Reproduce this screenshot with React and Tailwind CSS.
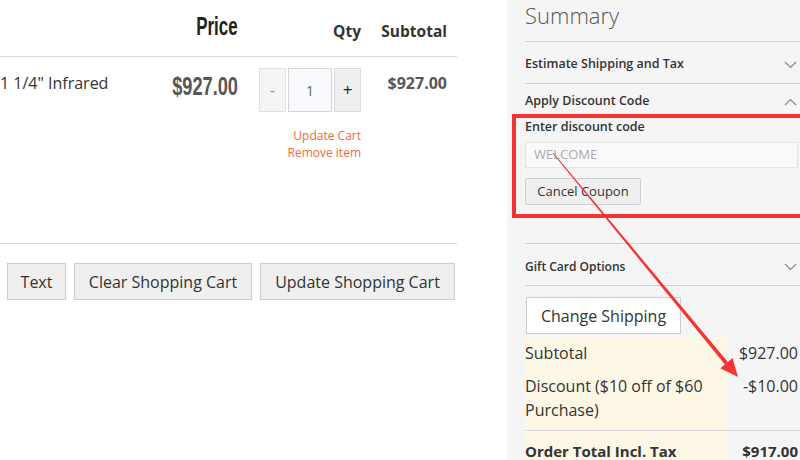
import React from 'react';

const Chevron = ({ up }) => (
  <svg width="13" height="8" viewBox="0 0 13 8" className="shrink-0">
    <polyline
      points={up ? '1,7 6.5,1.5 12,7' : '1,1 6.5,6.5 12,1'}
      fill="none"
      stroke="#8a8a8a"
      strokeWidth="1.2"
    />
  </svg>
);

const condensed = { fontFamily: '"Liberation Sans Narrow", "Liberation Sans", sans-serif' };

const App = () => {
  return (
    <div className="relative w-[800px] h-[460px] overflow-hidden bg-white text-[#333] font-['Open_Sans',sans-serif]">
      <div className="flex h-full">
        {/* Cart table */}
        <div className="w-[457px] shrink-0">
          <div className="grid grid-cols-[100px_138px_124px_85px] h-[57px] border-b border-[#d9d9d9] items-start pt-[10px]">
            <div />
            <div className="text-right whitespace-nowrap">
              <span style={condensed} className="inline-block origin-right scale-x-[0.65] text-[26px] font-bold leading-[32px] text-[#222]">Price</span>
            </div>
            <div className="text-right pt-[10px] text-[15.5px] font-bold leading-[22px] pr-[1px]">Qty</div>
            <div className="text-right pt-[10px] text-[15.5px] font-bold leading-[22px]">Subtotal</div>
          </div>

          <div className="grid grid-cols-[100px_138px_124px_85px] h-[187px] border-b border-[#d9d9d9] items-start pt-[11px]">
            <div className="pt-[3px] text-[16px] leading-[24px] whitespace-nowrap">1 1/4" Infrared</div>
            <div className="text-right whitespace-nowrap pt-[2px]">
              <span style={condensed} className="inline-block origin-right scale-x-[0.7] text-[26px] font-bold leading-[32px] text-[#575757]">$927.00</span>
            </div>
            <div className="flex flex-col items-end pr-[1px]">
              <div className="flex gap-[2px]">
                <div className="w-[27px] h-[44px] flex items-center justify-center bg-[#f4f4f4] border border-[#e1e1e1] text-[#888] text-[14px]">-</div>
                <div className="w-[44px] h-[44px] flex items-center justify-center bg-[#f8f9fd] border border-[#d6d6d6] text-[#666] text-[14px]">1</div>
                <div className="w-[27px] h-[44px] flex items-center justify-center bg-[#efefef] border border-[#dcdcdc] text-[#222] text-[17px]">+</div>
              </div>
              <div className="mt-[15px] text-right text-[12px] leading-[17px] text-[#f26a3b]">
                <div>Update Cart</div>
                <div>Remove item</div>
              </div>
            </div>
            <div className="text-right pt-[3px] text-[16px] font-bold leading-[24px] text-[#575757]">$927.00</div>
          </div>

          <div className="flex gap-2 pl-[7px] mt-[19px]">
            {['Text', 'Clear Shopping Cart', 'Update Shopping Cart'].map((label, i) => (
              <div
                key={label}
                className={`${['w-[59px]', 'w-[178px]', 'w-[195px]'][i]} h-[37px] flex items-center justify-center bg-[#efefef] border border-[#cdcdcd] text-[16px] text-[#333]`}
              >
                {label}
              </div>
            ))}
          </div>
        </div>

        {/* Summary sidebar */}
        <div className="ml-[50px] flex-1 bg-[#f5f5f5] pl-[18px]">
          <div className="h-[42px] border-b border-[#d1d1d1] text-[22px] font-light leading-[30px] text-[#575757]">Summary</div>

          <div className="h-[42px] border-b border-[#d1d1d1] flex items-center justify-between pt-[4px] pr-[3px]">
            <span className="text-[12.5px] font-semibold">Estimate Shipping and Tax</span>
            <Chevron />
          </div>

          <div className="flex items-center justify-between pt-[3px] pr-[3px] h-[32px]">
            <span className="text-[12.5px] font-semibold">Apply Discount Code</span>
            <Chevron up />
          </div>
          <div className="text-[12.5px] font-semibold leading-[20px] mt-[1px]">Enter discount code</div>
          <div className="mt-[5px] mr-[2px] h-[26px] bg-[#f9f9f9] border border-[#e3e3e3] flex items-center px-[8px] text-[13px] text-[#aaa]">WELCOME</div>
          <div className="mt-[10px] w-[116px] h-[27px] flex items-center justify-center bg-[#efefef] border border-[#cfcfcf] rounded-[2px] text-[13px]">Cancel Coupon</div>

          <div className="mt-[38px] border-t border-[#d1d1d1] h-[43px] border-b flex items-center justify-between pt-[4px] pr-[3px]">
            <span className="text-[12px] font-semibold">Gift Card Options</span>
            <Chevron />
          </div>

          <div className="mt-[11px] ml-[1px] w-[155px] h-[37px] flex items-center justify-center bg-white border border-[#cdcdcd] text-[16px]">Change Shipping</div>

          <div className="mt-[3px] grid grid-cols-[202px_1fr] text-[16px] leading-[24px]">
            <div className="bg-[#fdf8e6] pt-[4px] pb-[6px]">Subtotal</div>
            <div className="text-right pt-[4px] pr-[2px]">$927.00</div>
            <div className="bg-[#fdf8e6] pt-[3px] pb-[8px] border-b border-[#d9d9d9]">Discount ($10 off of $60 Purchase)</div>
            <div className="text-right pt-[3px] pr-[2px] border-b border-[#d9d9d9]">-$10.00</div>
            <div className="bg-[#fdf8e6] pt-[8px] font-bold text-[15px] whitespace-nowrap">Order Total Incl. Tax</div>
            <div className="text-right pt-[8px] pr-[2px] font-bold text-[15px]">$917.00</div>
          </div>
        </div>
      </div>

      {/* annotation overlay */}
      <div className="absolute left-[512px] top-[114px] w-[300px] h-[104px] border-4 border-[#f53535]" />
      <svg className="absolute inset-0 pointer-events-none" width="800" height="460" viewBox="0 0 800 460">
        <polygon points="553.4,152.7 727.9,362 724.9,364.4 552.6,153.3" fill="#f53535" />
        <polygon points="738,377 732.5,358.1 720.3,368.3" fill="#f53535" />
      </svg>
    </div>
  );
};

export default App;
